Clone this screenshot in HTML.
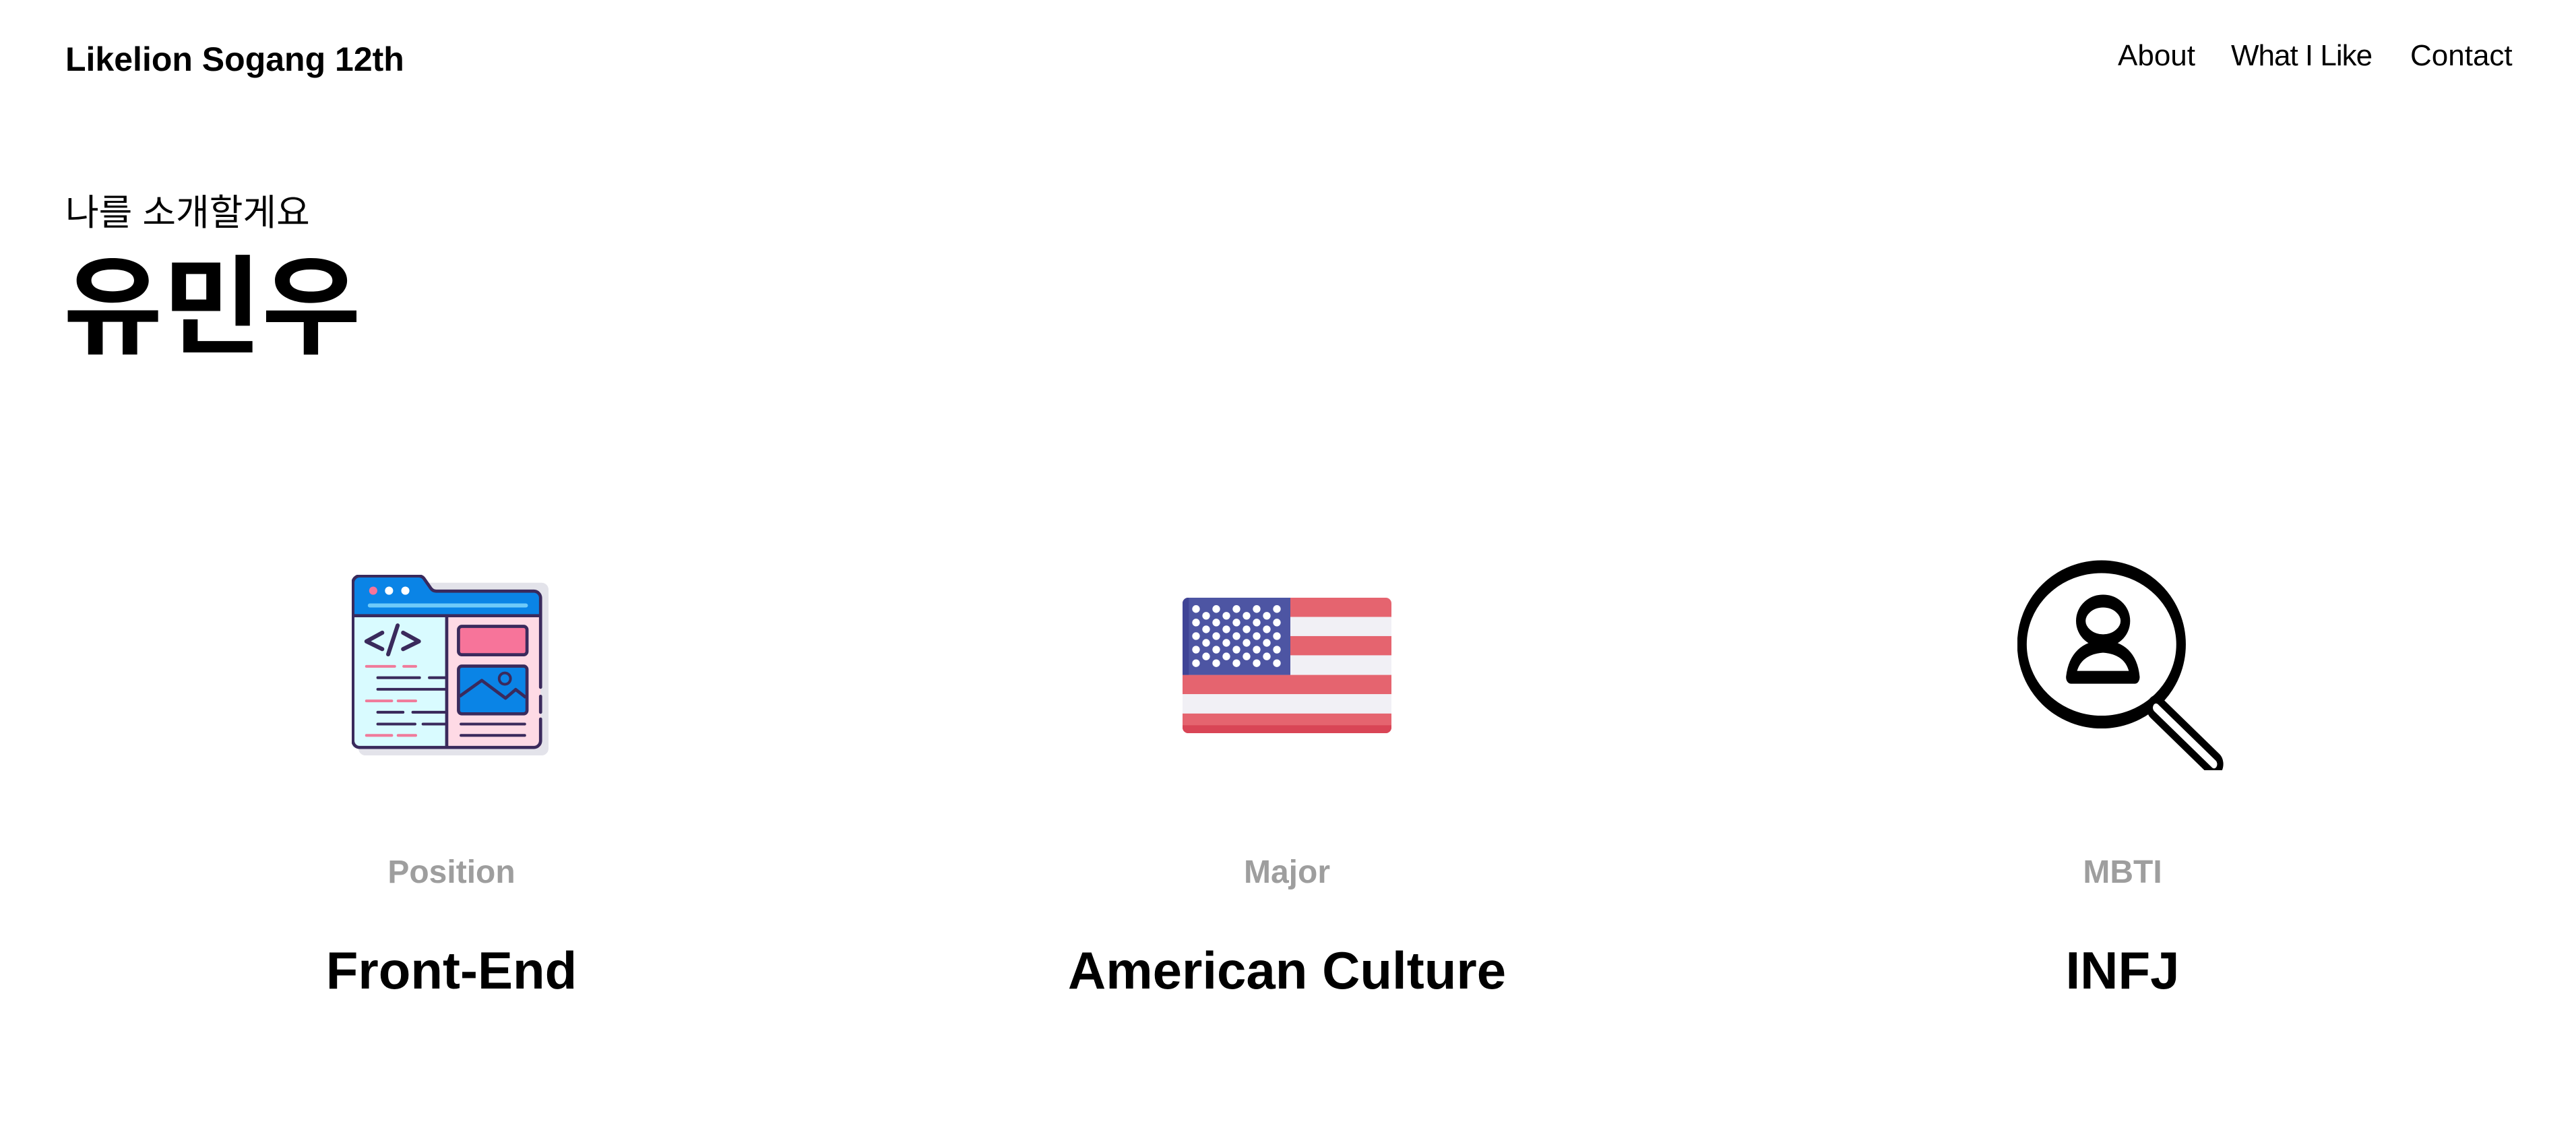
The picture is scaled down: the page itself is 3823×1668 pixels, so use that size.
<!DOCTYPE html>
<html><head><meta charset="utf-8"><style>
html,body{margin:0;padding:0;background:#fff;width:3823px;height:1668px;overflow:hidden;position:relative;font-family:"Liberation Sans","Noto Sans CJK KR",sans-serif;color:#000}
.a{position:absolute;line-height:1;white-space:nowrap}
.c{transform:translateX(-50%)}
.lab{font-size:48px;font-weight:bold;color:#9e9e9e}
.val{font-size:78px;font-weight:bold}
svg{position:absolute}
</style></head><body>
<div class="a" style="left:97px;top:63px;font-size:50px;font-weight:bold">Likelion Sogang 12th</div>
<div class="a" style="left:3143px;top:61px;font-size:44px">About</div>
<div class="a" style="left:3311px;top:61px;font-size:44px;letter-spacing:-1px">What I Like</div>
<div class="a" style="left:3577px;top:61px;font-size:44px">Contact</div>
<div class="a" style="left:97px;top:289px;font-size:54px">나를 소개할게요</div>
<div class="a" style="left:94px;top:377px;font-size:160px;font-weight:bold">유민우</div>

<svg style="left:522px;top:853px" width="292" height="268" viewBox="135 165 870 795" preserveAspectRatio="none">
<rect x="165" y="200" width="840" height="760" rx="30" fill="#e3e3ea"/>
<path d="M140 345 V200 a30 30 0 0 1 30 -30 H430 a30 30 0 0 1 25 12 L485 225 a30 30 0 0 0 25 12 H940 a30 30 0 0 1 30 30 V345 Z" fill="#0a84e6"/>
<rect x="140" y="345" width="415" height="580" fill="#d9fbff"/>
<rect x="555" y="345" width="415" height="580" fill="#fedae5"/>
<path d="M140 345 V200 a30 30 0 0 1 30 -30 H430 a30 30 0 0 1 25 12 L485 225 a30 30 0 0 0 25 12 H940 a30 30 0 0 1 30 30 V660 M970 700 V770 M970 800 V895 a30 30 0 0 1 -30 30 H170 a30 30 0 0 1 -30 -30 V345 H970 M555 345 V925" fill="none" stroke="#3a2a5c" stroke-width="14" stroke-linecap="round" stroke-linejoin="round"/>
<circle cx="230" cy="235" r="18" fill="#f7749a"/><circle cx="300" cy="235" r="18" fill="#fff"/><circle cx="372" cy="235" r="18" fill="#fff"/>
<line x1="215" y1="300" x2="905" y2="300" stroke="#6fcaf9" stroke-width="18" stroke-linecap="round"/>
<rect x="607" y="392" width="303" height="125" rx="15" fill="#f7749a" stroke="#3a2a5c" stroke-width="14"/>
<rect x="607" y="567" width="303" height="210" rx="15" fill="#0a84e6" stroke="#3a2a5c" stroke-width="14"/>
<path d="M612 700 L710 630 L815 708 L860 670 L905 705" fill="none" stroke="#3a2a5c" stroke-width="14" stroke-linejoin="round"/>
<circle cx="812" cy="622" r="25" fill="none" stroke="#3a2a5c" stroke-width="12"/>
<path d="M270 420 L200 458 L270 492 M362 420 L432 458 L362 492 M338 388 L296 515" fill="none" stroke="#3a2a5c" stroke-width="18" stroke-linecap="round" stroke-linejoin="round"/>
<g stroke-width="12" stroke-linecap="round">
<path d="M200 568H325M365 568H418M200 720H312M340 720H418M200 872H312M340 872H418" stroke="#f07a9a"/>
<path d="M250 618H435M478 618H548M250 669H548M250 770H362M405 770H548M250 822H415M450 822H548M618 822H900M618 872H900" stroke="#3a2a5c"/>
</g>
</svg>

<svg style="left:1755px;top:887px" width="310" height="201" viewBox="45 55 930 600" preserveAspectRatio="none">
<defs><clipPath id="f"><rect x="45" y="55" width="930" height="600" rx="25"/></clipPath></defs>
<g clip-path="url(#f)">
<rect x="45" y="55" width="930" height="600" fill="#f1f0f5"/>
<g fill="#e5646f"><rect x="45" y="55" width="930" height="85"/><rect x="45" y="225" width="930" height="85"/><rect x="45" y="397" width="930" height="85"/><rect x="45" y="568" width="930" height="87"/></g>
<rect x="45" y="620" width="930" height="40" fill="#d94556"/>
<rect x="45" y="55" width="480" height="342" fill="#4d55a3"/>
<rect x="45" y="55" width="28" height="342" fill="#3f4496"/>
<g fill="#fff">
<g id="r1"><circle cx="105" cy="105" r="17"/><circle cx="195" cy="105" r="17"/><circle cx="285" cy="105" r="17"/><circle cx="375" cy="105" r="17"/><circle cx="465" cy="105" r="17"/></g>
<use href="#r1" y="60"/><use href="#r1" y="120"/><use href="#r1" y="180"/><use href="#r1" y="240"/>
<g id="r2"><circle cx="150" cy="135" r="17"/><circle cx="240" cy="135" r="17"/><circle cx="330" cy="135" r="17"/><circle cx="420" cy="135" r="17"/></g>
<use href="#r2" y="60"/><use href="#r2" y="120"/><use href="#r2" y="180"/>
</g></g>
</svg>

<svg style="left:2994px;top:831px" width="312" height="312" viewBox="135 75 925 690" preserveAspectRatio="none">
<ellipse cx="505" cy="352" rx="350" ry="255" fill="none" stroke="#000" stroke-width="42"/>
<path d="M745 560 L1000 745" stroke="#000" stroke-width="82" stroke-linecap="round"/>
<path d="M745 560 L1000 745" stroke="#fff" stroke-width="28" stroke-linecap="round"/>
<ellipse cx="512" cy="275" rx="98" ry="65" fill="none" stroke="#000" stroke-width="42"/>
<path d="M370 460 Q385 365 512 358 Q639 365 652 460 Z" fill="none" stroke="#000" stroke-width="42" stroke-linejoin="round"/>
</svg>

<div class="a c lab" style="left:670px;top:1271px">Position</div>
<div class="a c lab" style="left:1910px;top:1271px">Major</div>
<div class="a c lab" style="left:3150px;top:1271px">MBTI</div>
<div class="a c val" style="left:670px;top:1401px">Front-End</div>
<div class="a c val" style="left:1910px;top:1401px">American Culture</div>
<div class="a c val" style="left:3150px;top:1401px">INFJ</div>
</body></html>
